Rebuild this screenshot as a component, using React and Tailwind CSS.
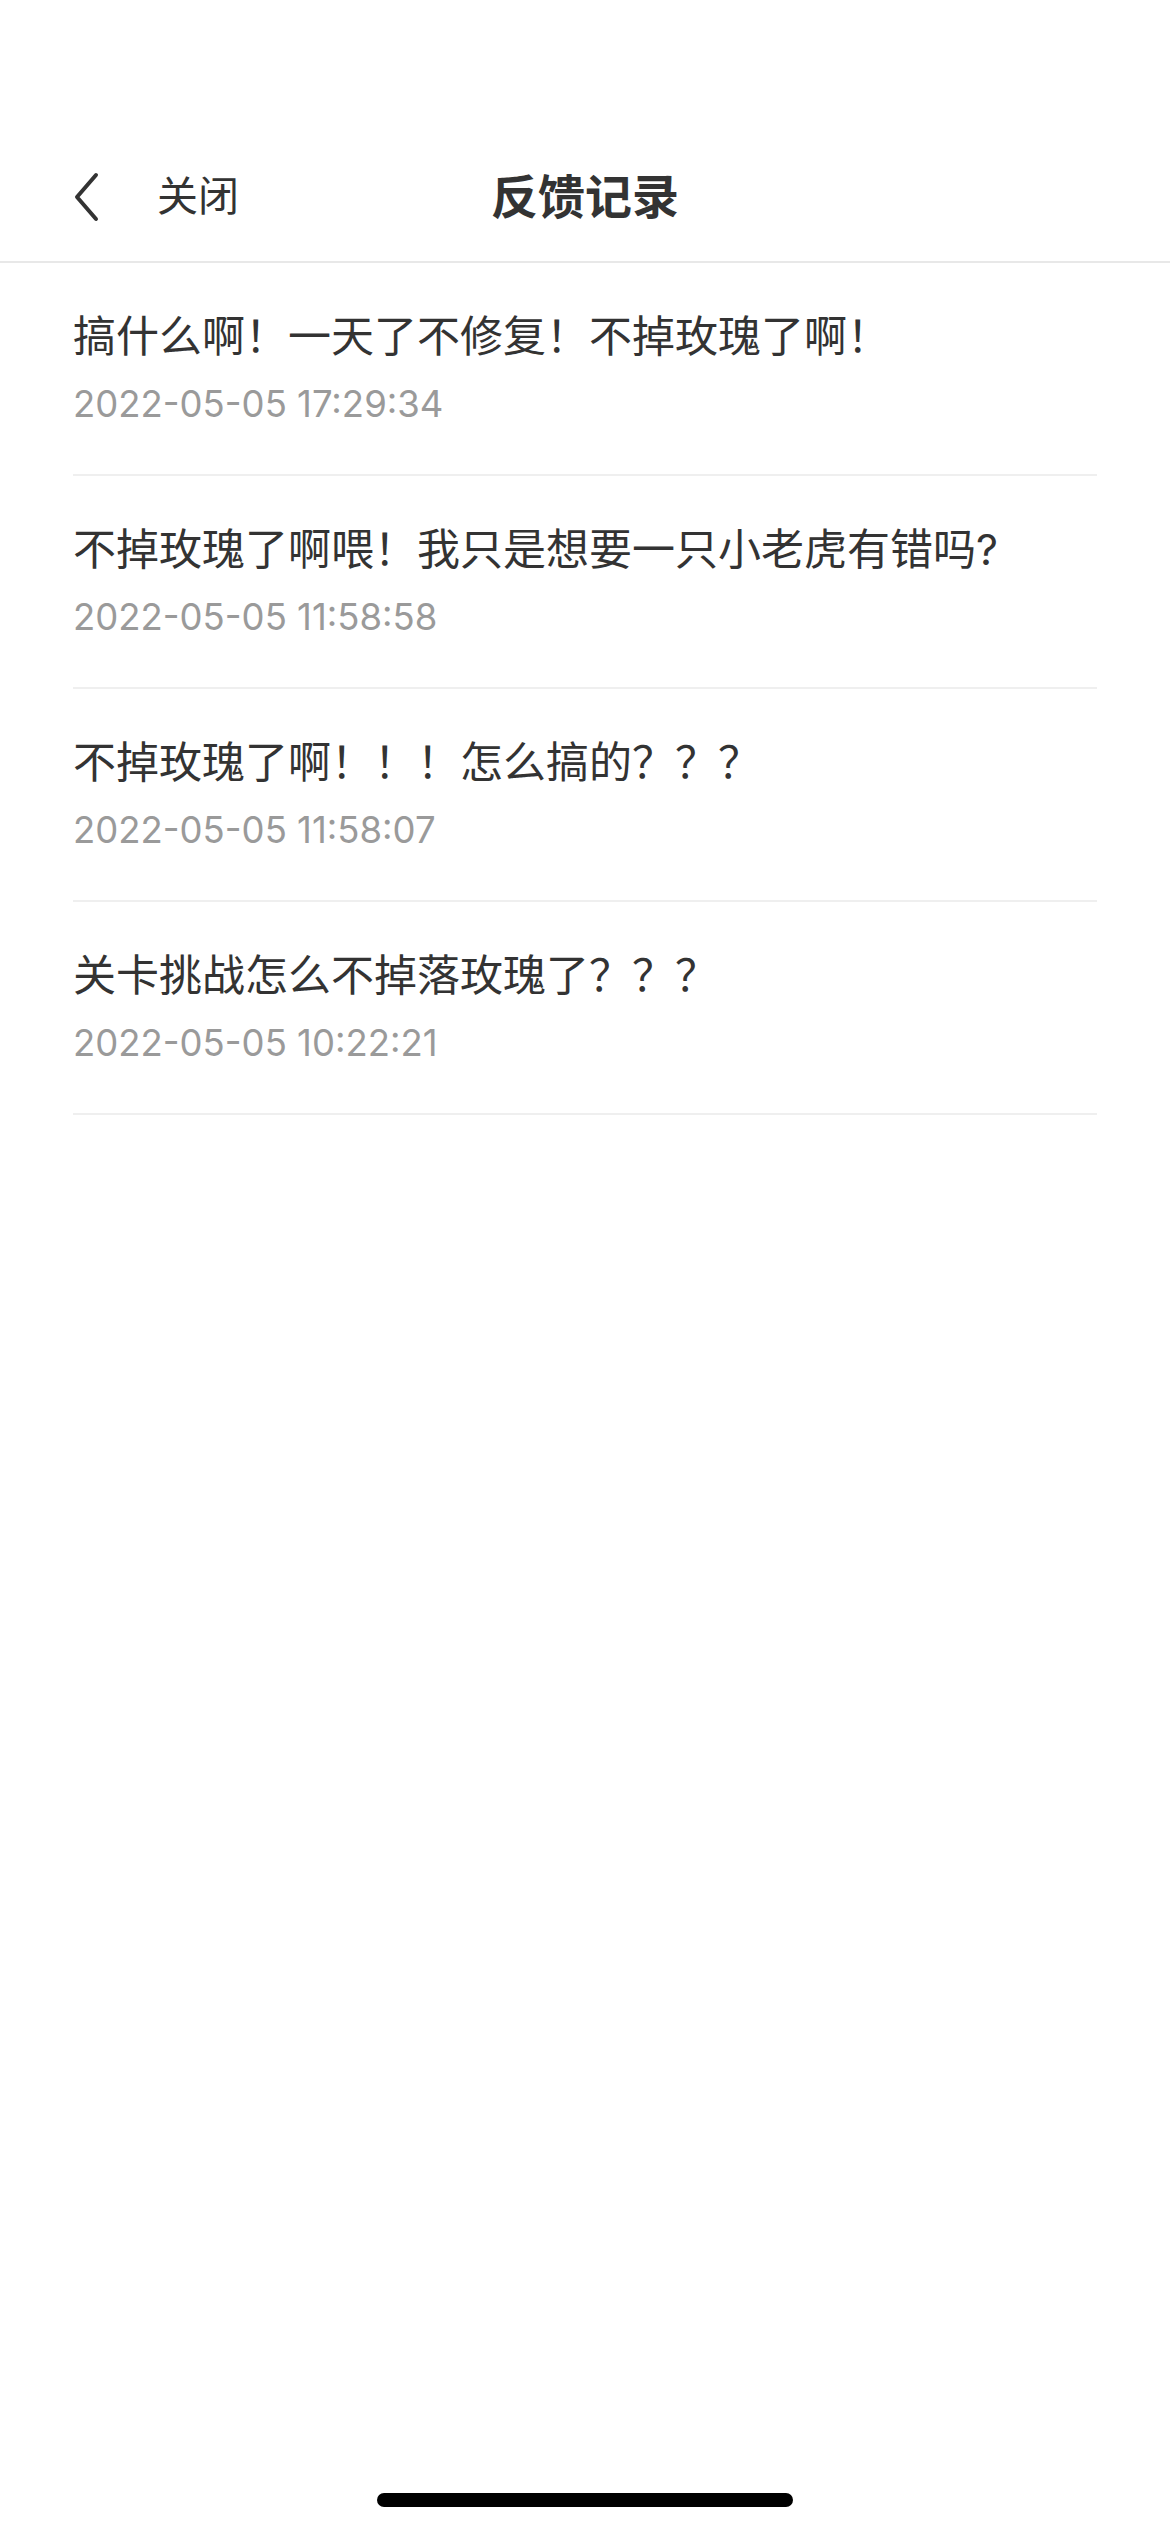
export default function App() {
  const items = [
    { t: "搞什么啊！一天了不修复！不掉玫瑰了啊！", d: "2022-05-05 17:29:34" },
    { t: "不掉玫瑰了啊喂！我只是想要一只小老虎有错吗?", d: "2022-05-05 11:58:58" },
    { t: "不掉玫瑰了啊！！！怎么搞的？？？", d: "2022-05-05 11:58:07" },
    { t: "关卡挑战怎么不掉落玫瑰了？？？", d: "2022-05-05 10:22:21" },
  ];
  const cjk = { fontFamily: '"Inter", "Noto Sans CJK SC", sans-serif' };
  return (
    <div className="w-[1170px] h-[2532px] bg-white flex flex-col relative" style={cjk}>
      <div className="h-[132px]" />
      <div className="h-[131px] border-b-2 border-[#e8e8e8] grid grid-cols-[1fr_auto_1fr] items-center px-[73px]">
        <div className="flex items-center">
          <svg width="26" height="50" viewBox="0 0 26 50" fill="none">
            <path d="M23 3 L4 25 L23 47" stroke="#333" strokeWidth="4" strokeLinecap="round" strokeLinejoin="round" />
          </svg>
          <span className="ml-[58px] text-[41px] leading-none text-[#333]">关闭</span>
        </div>
        <div className="text-[47px] font-bold leading-none text-[#333]">反馈记录</div>
        <div />
      </div>
      <div className="px-[73px] flex flex-col">
        {items.map((it, i) => (
          <div key={i} className="pt-[45px] pb-[48px] border-b-2 border-[#efefef] flex flex-col">
            <div className="text-[43px] leading-[56px] text-[#333]">{it.t}</div>
            <div className="mt-[18px] text-[36.5px] leading-[44px] text-[#9a9a9a]">{it.d}</div>
          </div>
        ))}
      </div>
      <div className="absolute left-[377px] top-[2493px] w-[416px] h-[14px] rounded-full bg-black" />
    </div>
  );
}
